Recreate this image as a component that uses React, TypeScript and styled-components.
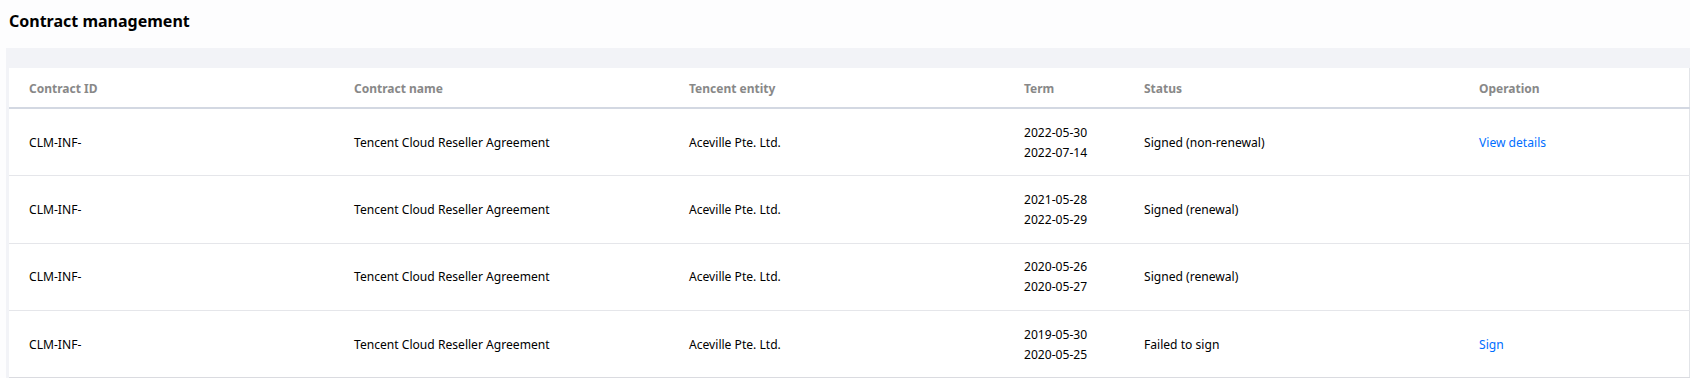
import React from "react";
import styled, { createGlobalStyle } from "styled-components";

const GlobalStyle = createGlobalStyle`
  body {
    margin: 0;
    background: #fdfdfe;
    font-family: "Noto Sans", "Open Sans", sans-serif;
  }
`;

type Row = {
  id: string;
  name: string;
  entity: string;
  start: string;
  end: string;
  status: string;
  action?: string;
};

const rows: Row[] = [
  { id: "CLM-INF-", name: "Tencent Cloud Reseller Agreement", entity: "Aceville Pte. Ltd.", start: "2022-05-30", end: "2022-07-14", status: "Signed (non-renewal)", action: "View details" },
  { id: "CLM-INF-", name: "Tencent Cloud Reseller Agreement", entity: "Aceville Pte. Ltd.", start: "2021-05-28", end: "2022-05-29", status: "Signed (renewal)" },
  { id: "CLM-INF-", name: "Tencent Cloud Reseller Agreement", entity: "Aceville Pte. Ltd.", start: "2020-05-26", end: "2020-05-27", status: "Signed (renewal)" },
  { id: "CLM-INF-", name: "Tencent Cloud Reseller Agreement", entity: "Aceville Pte. Ltd.", start: "2019-05-30", end: "2020-05-25", status: "Failed to sign", action: "Sign" },
];

const columns = ["Contract ID", "Contract name", "Tencent entity", "Term", "Status", "Operation"];

const App = () => {
  return (
    <Page>
      <GlobalStyle />
      <Title>Contract management</Title>
      <Panel>
        <Table>
          <colgroup>
            <col style={{ width: 325 }} />
            <col style={{ width: 335 }} />
            <col style={{ width: 335 }} />
            <col style={{ width: 120 }} />
            <col style={{ width: 335 }} />
            <col />
          </colgroup>
          <thead>
            <tr>
              {columns.map((c) => (
                <Th key={c}>{c}</Th>
              ))}
            </tr>
          </thead>
          <tbody>
            {rows.map((r, i) => (
              <Tr key={i}>
                <Td>{r.id}</Td>
                <Td>{r.name}</Td>
                <Td>{r.entity}</Td>
                <Td>
                  <DateLine>{r.start}</DateLine>
                  <DateLine>{r.end}</DateLine>
                </Td>
                <Td>{r.status}</Td>
                <Td>{r.action && <Link href="#">{r.action}</Link>}</Td>
              </Tr>
            ))}
          </tbody>
        </Table>
      </Panel>
    </Page>
  );
};

export default App;

const Page = styled.div`
  width: 1690px;
`;

const Title = styled.h2`
  margin: 0;
  height: 48px;
  padding: 10px 0 0 9px;
  box-sizing: border-box;
  font-size: 16px;
  font-weight: 700;
  color: #000;
  line-height: 22px;
`;

const Panel = styled.div`
  margin-left: 6px;
  padding: 20px 0 0 3px;
  background: #f2f3f7;
`;

const Table = styled.table`
  width: 100%;
  border-collapse: collapse;
  table-layout: fixed;
  background: #fff;
  border-right: 1px solid #e2e4e8;
`;

const Th = styled.th`
  height: 40px;
  padding: 1px 0 0 20px;
  text-align: left;
  font-size: 12px;
  font-weight: 700;
  color: #888;
  border-bottom: 2px solid #d3d8e2;
  vertical-align: middle;
  box-sizing: border-box;
`;

const Tr = styled.tr`
  height: 67.5px;
  border-bottom: 1px solid #e5e6ea;
  &:last-child {
    border-bottom: 2px solid #dadbe0;
  }
`;

const Td = styled.td`
  padding: 1px 0 0 20px;
  font-size: 12.1px;
  color: #000;
  vertical-align: middle;
  line-height: 20px;
`;

const DateLine = styled.div`
  line-height: 20px;
`;

const Link = styled.a`
  color: #006eff;
  text-decoration: none;
`;
